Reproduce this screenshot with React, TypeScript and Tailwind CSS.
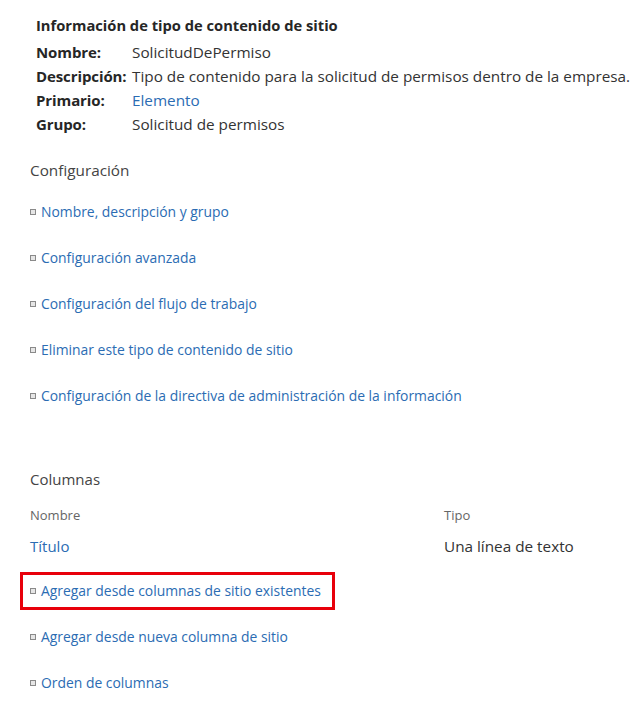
import { ReactNode } from 'react';

const font = { fontFamily: '"Open Sans", "Noto Sans", Arial, sans-serif' };

function Bullet() {
  return <span className="inline-block w-[6px] h-[6px] border-[1.5px] border-[#8a8a8a] bg-[#e6e6e6] mr-[5px] shrink-0" />;
}

function LinkItem({ children, boxed }: { children: ReactNode; boxed?: boolean }) {
  if (boxed) {
    return (
      <div className="h-[46px] flex items-center">
        <div className="ml-[-10px] w-[315px] h-[38px] border-[3px] border-[#e8000b] flex items-center pl-[7px]">
          <Bullet />
          <span className="text-[#2b6cb3] text-[13.9px]">{children}</span>
        </div>
      </div>
    );
  }
  return (
    <div className="h-[46px] flex items-center">
      <Bullet />
      <span className="text-[#2b6cb3] text-[13.9px]">{children}</span>
    </div>
  );
}

const info = [
  { label: 'Nombre:', value: 'SolicitudDePermiso' },
  { label: 'Descripción:', value: 'Tipo de contenido para la solicitud de permisos dentro de la empresa.' },
  { label: 'Primario:', value: 'Elemento', link: true },
  { label: 'Grupo:', value: 'Solicitud de permisos' },
];

export default function App() {
  return (
    <div className="w-[641px] h-[711px] bg-white overflow-hidden" style={font}>
      <div className="pl-[36px] pt-[14px]">
        <div className="text-[14.7px] font-bold text-[#262626] leading-[22px]">
          Información de tipo de contenido de sitio
        </div>
        <div className="mt-[4px]">
          {info.map((row) => (
            <div key={row.label} className="flex leading-[24px] whitespace-nowrap">
              <span className="w-[96px] shrink-0 text-[15px] font-bold text-[#262626] tracking-[-0.1px]">{row.label}</span>
              <span className={`text-[15.3px] ${row.link ? 'text-[#2b6cb3]' : 'text-[#333]'}`}>{row.value}</span>
            </div>
          ))}
        </div>
      </div>

      <div className="pl-[30px] pr-[20px]">
        <div className="mt-[23px] text-[15.3px] text-[#444] leading-[22px]">Configuración</div>
        <div className="mt-[8px]">
          <LinkItem>Nombre, descripción y grupo</LinkItem>
          <LinkItem>Configuración avanzada</LinkItem>
          <LinkItem>Configuración del flujo de trabajo</LinkItem>
          <LinkItem>Eliminar este tipo de contenido de sitio</LinkItem>
          <LinkItem>Configuración de la directiva de administración de la información</LinkItem>
        </div>

        <div className="mt-[49px] text-[15px] text-[#444] leading-[22px]">Columnas</div>
        <div className="mt-[16px] flex text-[13px] text-[#666] leading-[18px]">
          <span className="w-[414px]">Nombre</span>
          <span>Tipo</span>
        </div>
        <div className="mt-[10px] flex leading-[24px]">
          <span className="w-[414px] text-[15px] text-[#2b6cb3]">Título</span>
          <span className="text-[15.3px] text-[#333]">Una línea de texto</span>
        </div>
        <div className="mt-[10px]">
          <LinkItem boxed>Agregar desde columnas de sitio existentes</LinkItem>
          <LinkItem>Agregar desde nueva columna de sitio</LinkItem>
          <LinkItem>Orden de columnas</LinkItem>
        </div>
      </div>
    </div>
  );
}
